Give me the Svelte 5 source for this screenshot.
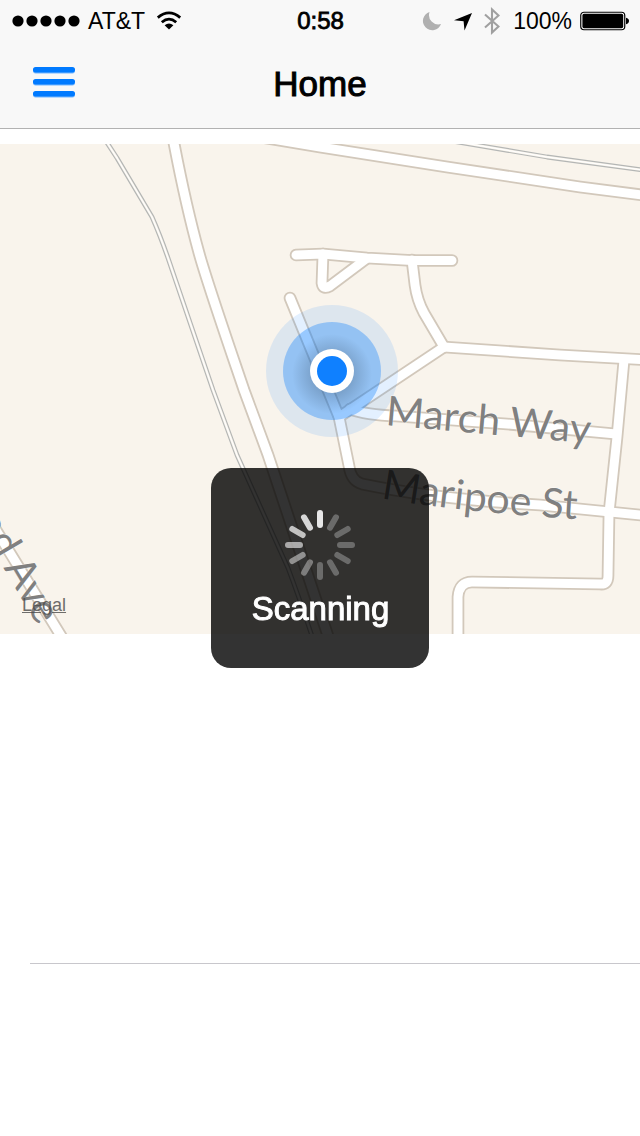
<script>
  const roads = [
    'M230 132 L320 147 L447 167 L580 187 L650 196',
    'M173 138 C180 175 186 206 199 253 C207 282 225 334 244 390 L268 455 L330 642',
    'M296 255 L323 254 L367 258 L412 260.5 L452 260.5',
    'M323 254 L322 283 Q323 290 330 286 L366 259',
    'M412 260 L415 285 Q417 300 424 313 L444 347',
    'M444 347 L560 355 L650 360',
    'M444 347 L339 417',
    'M290 298 L339 417 L349 466 Q351 481 362 484 C410 494 470 501 540 505 L650 516',
    'M350 409 Q366 415 396 416 L507 424 L616 434',
    'M624 360 L617 437 L609 513 L608 576 Q608 585 600 584 L472 582 Q459 582 458 597 L458 642',
    'M-12 517 L66 644'
  ];
  const rails = [
    'M104 138 L117 158 L152 217 Q160 235 168 258 L213 390 L237 455 L288 568 Q299 597 314 642',
    'M440 139 L547 157 L650 171'
  ];
  const spokes = [0.88, 0.28, 0.28, 0.28, 0.28, 0.28, 0.28, 0.36, 0.46, 0.58, 0.7, 0.8];
</script>

<div class="screen">
  <header>
    <div class="status">
      <div class="side">
        <svg class="signal" viewBox="0 0 68 12" role="img" aria-label="Signal">
          {#each [6, 20, 34, 48, 62] as cx}
            <circle {cx} cy="6" r="5.6" />
          {/each}
        </svg>
        <span>AT&amp;T</span>
        <svg class="wifi" viewBox="0 0 26 20" role="img" aria-label="Wi-Fi">
          <path d="M1.8 6.6 Q13 -2.8 24.2 6.6" fill="none" stroke="#000" stroke-width="2.8" />
          <path d="M5.8 11.2 Q13 5 20.2 11.2" fill="none" stroke="#000" stroke-width="2.8" />
          <path d="M8.6 14.2 Q13 10.6 17.4 14.2 L13 18.6 Z" />
        </svg>
      </div>
      <time>0:58</time>
      <div class="side end">
        <div class="icons">
          <svg class="moon" viewBox="0 0 20 20" aria-hidden="true">
            <path d="M7.5 1 A9.3 9.3 0 1 0 19 13 A9.4 9.4 0 0 1 7.5 1 Z" fill="#b0b0b0" />
          </svg>
          <svg class="arrow" viewBox="0 0 20 20" aria-hidden="true">
            <path d="M19 2 L11.5 19.4 L10.6 10.2 L1 9.3 Z" />
          </svg>
          <svg class="bluetooth" viewBox="0 0 16 28" aria-hidden="true">
            <path d="M1 7.5 L14.5 19.5 L8 25.5 V2.5 L14.5 8.5 L1 20.5" fill="none" stroke="#a0a0a0" stroke-width="2.1" />
          </svg>
        </div>
        <span>100%</span>
        <svg class="battery" viewBox="0 0 49 20" role="img" aria-label="Battery full">
          <rect x="0.75" y="1.25" width="44" height="17.5" rx="3.2" fill="#fff" stroke="#000" stroke-width="1.2" />
          <rect x="2.4" y="2.8" width="40.8" height="14.4" rx="1.6" />
          <path d="M46 6.8 Q49 7.6 49 10 Q49 12.4 46 13.2 Z" />
        </svg>
      </div>
    </div>
    <nav>
      <button aria-label="Menu">
        <svg viewBox="0 0 44 32" aria-hidden="true">
          {#each [1, 13, 25] as y}
            <rect x="1" y={y + 1} width="42" height="5.4" rx="2.6" fill="#73b6ff" />
            <rect x="1" {y} width="42" height="5.4" rx="2.6" fill="#007aff" />
          {/each}
        </svg>
      </button>
      <h1>Home</h1>
    </nav>
  </header>

  <main>
    <section class="map">
      <svg viewBox="0 144 640 490" preserveAspectRatio="xMidYMid slice" role="img" aria-label="Map">
        <defs>
          <path id="march" d="M385 425 L620 446" />
          <path id="maripoe" d="M381 498 Q470 514 610 521" />
          <path id="avenue" d="M-25 520 L66 674" />
          <radialGradient id="shade">
            <stop offset="0.5" stop-color="#234" stop-opacity="0.22" />
            <stop offset="1" stop-color="#234" stop-opacity="0" />
          </radialGradient>
        </defs>
        <g fill="none" stroke-linejoin="round">
          {#each rails as d}
            <path {d} stroke="#b4b6b5" stroke-width="4.8" />
            <path {d} stroke="#f9f4ec" stroke-width="2.4" />
            <path {d} stroke="#fff" stroke-width="1" />
          {/each}
        </g>
        <g fill="none" stroke-linejoin="round" stroke-linecap="round">
          {#each roads as d}
            <path {d} stroke="#d2c8bb" stroke-width="12.6" />
          {/each}
          {#each roads as d}
            <path {d} stroke="#fff" stroke-width="9" />
          {/each}
        </g>
        <g>
          <circle cx="332" cy="371" r="66" fill="#007aff" fill-opacity="0.11" />
          <circle cx="332" cy="371" r="49" fill="#007aff" fill-opacity="0.33" />
          <circle cx="332" cy="374" r="40" fill="url(#shade)" />
          <circle cx="332" cy="371" r="22" fill="#fff" />
          <circle cx="332" cy="371" r="15" fill="#0f80ff" />
        </g>
        <g class="street">
          <text><textPath href="#march">March Way</textPath></text>
          <text><textPath href="#maripoe">Maripoe St</textPath></text>
          <text><textPath href="#avenue">od Ave</textPath></text>
        </g>
      </svg>
      <a href="#legal">Legal</a>
    </section>
    <section class="panel"></section>
  </main>

  <div class="overlay">
    <div class="hud" role="status">
      <svg viewBox="-36 -36 72 72" aria-hidden="true">
        {#each spokes as opacity, i}
          <path d="M0 -20 V-32" transform={`rotate(${i * 30})`} stroke="#fff" stroke-width="6" stroke-linecap="round" {opacity} />
        {/each}
      </svg>
      <p>Scanning</p>
    </div>
  </div>
</div>

<style>
  :global(body) {
    margin: 0;
    background: #fff;
  }
  .screen {
    min-height: 100vh;
    font-family: 'Liberation Sans', Arial, sans-serif;
    color: #000;
  }
  svg {
    display: block;
    flex: none;
  }
  header {
    background: #f8f8f8;
    border-bottom: 1px solid #b2b2b2;
  }
  .status {
    display: grid;
    grid-template-columns: 1fr auto 1fr;
    align-items: center;
    height: 41px;
    padding: 0 11px 0 12px;
    font-size: 23px;
    line-height: 42px;
  }
  .side {
    display: flex;
    align-items: center;
    gap: 8px;
  }
  .end {
    justify-content: flex-end;
  }
  .icons {
    display: flex;
    align-items: center;
    gap: 11px;
    margin-right: 5px;
  }
  time {
    font-size: 24px;
    -webkit-text-stroke: 0.8px #000;
  }
  .signal {
    width: 68px;
    height: 12px;
  }
  .wifi {
    width: 26px;
    height: 20px;
    margin-left: 3px;
  }
  .moon,
  .arrow {
    width: 20px;
    height: 20px;
  }
  .bluetooth {
    width: 16px;
    height: 28px;
  }
  .battery {
    width: 49px;
    height: 20px;
  }
  nav {
    display: grid;
    grid-template-columns: 1fr auto 1fr;
    align-items: center;
    height: 85px;
    padding: 0 32px 2px;
  }
  button {
    justify-self: start;
    padding: 0 0 4px;
    border: 0;
    background: none;
  }
  button svg {
    width: 44px;
    height: 32px;
  }
  h1 {
    margin: 0;
    font-size: 35px;
    font-weight: 400;
    line-height: 40px;
    -webkit-text-stroke: 1px #000;
  }
  .map {
    position: relative;
    margin-top: 15px;
    background: #f9f4ec;
  }
  .map svg {
    width: 100%;
    height: 490px;
  }
  .street {
    font-family: Lato, 'Open Sans', sans-serif;
    font-size: 41px;
    fill: #808080;
    stroke: #fff;
    stroke-opacity: 0.7;
    stroke-width: 1px;
    paint-order: stroke;
  }
  .map a {
    position: absolute;
    left: 22px;
    bottom: 19px;
    font-size: 18px;
    line-height: 20px;
    color: #4c4c4c;
    opacity: 0.8;
  }
  .panel {
    height: 329px;
    margin-left: 30px;
    border-bottom: 1px solid #c8c7cc;
  }
  .overlay {
    position: fixed;
    inset: 0;
    display: grid;
    place-items: center;
  }
  .hud {
    display: flex;
    flex-direction: column;
    align-items: center;
    gap: 8px;
    box-sizing: border-box;
    min-height: 200px;
    padding: 41px 40px 35px 41px;
    border-radius: 20px;
    background: rgba(0, 0, 0, 0.8);
  }
  .hud svg {
    width: 72px;
    height: 72px;
  }
  .hud p {
    margin: 0;
    font-size: 33px;
    line-height: 40px;
    color: #fff;
    -webkit-text-stroke: 1px #fff;
  }
</style>
